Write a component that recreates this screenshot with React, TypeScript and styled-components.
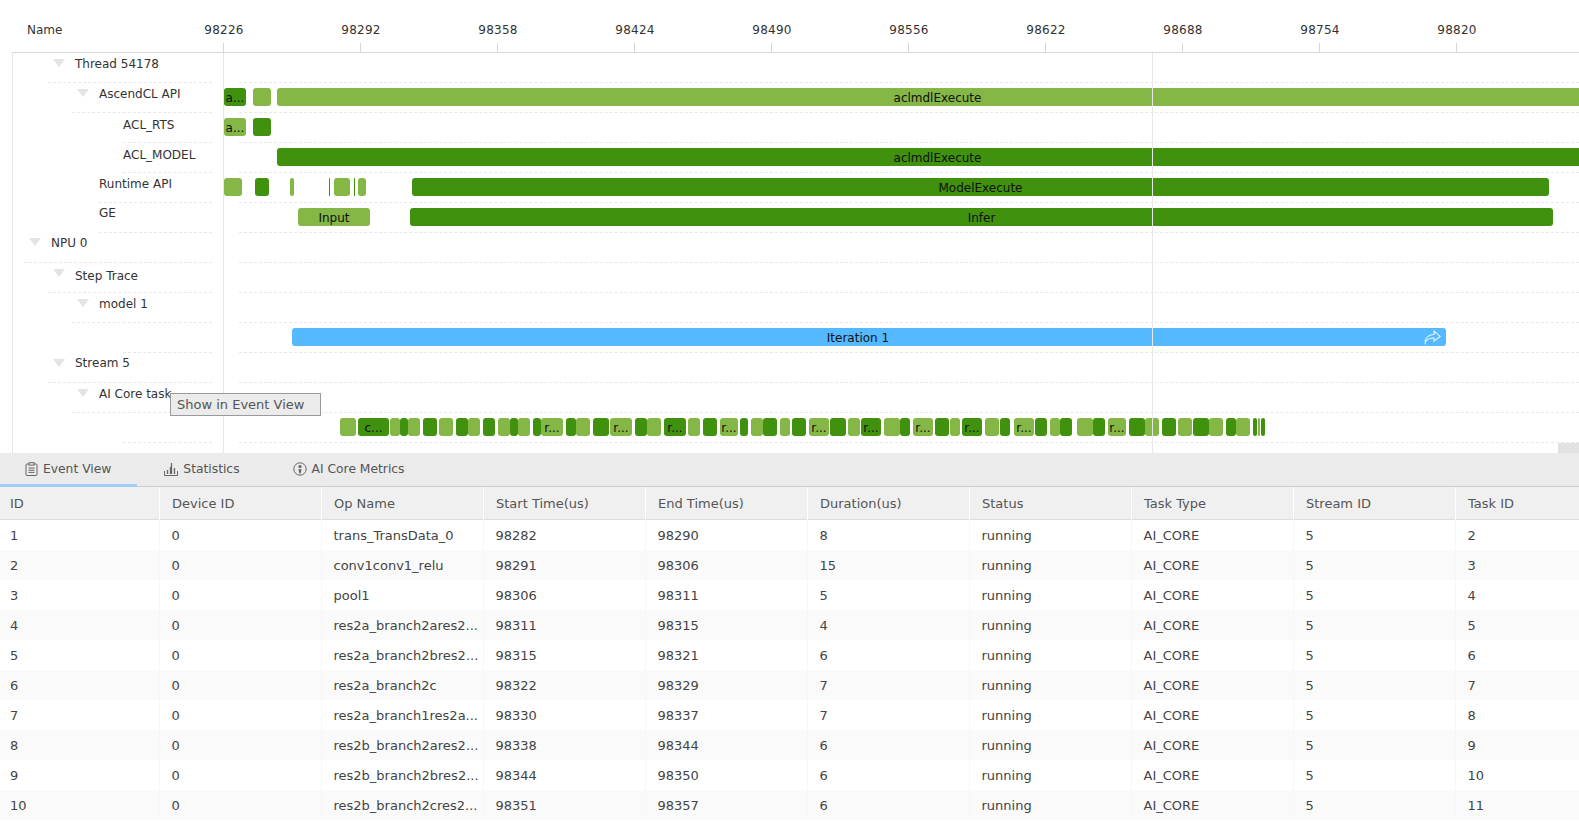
import React from "react";
import styled, { createGlobalStyle } from "styled-components";

const Global = createGlobalStyle`
  html, body { margin: 0; padding: 0; background: #fff; overflow: hidden; }
  body { font-family: "DejaVu Sans", sans-serif; color: #333; }
`;

const Page = styled.div`
  width: 1579px;
  height: 821px;
  overflow: hidden;
  display: flex;
  flex-direction: column;
`;

const Timeline = styled.section`
  position: relative;
  height: 453px;
  flex: none;
  overflow: hidden;
`;

const AxisHeader = styled.header`
  position: relative;
  height: 52px;
  margin-left: 12px;
  border-bottom: 1px solid #d6d6d6;
`;

const NameHeading = styled.span`
  position: absolute;
  left: 15px;
  top: 23px;
  font-size: 12px;
  line-height: 14px;
  color: #333;
`;

const TickLabel = styled.span`
  position: absolute;
  top: 23px;
  transform: translateX(-50%);
  font-size: 12px;
  line-height: 14px;
  letter-spacing: 0.25px;
  color: #333;
`;

const TickMark = styled.i`
  position: absolute;
  top: 43px;
  width: 1px;
  height: 9px;
  background: #d6d6d6;
`;

const ChartBody = styled.div`
  display: flex;
  height: 400px;
`;

const TreeColumn = styled.div`
  width: 199px;
  margin-left: 12px;
  padding-right: 11px;
  border-left: 1px solid #e6e6e6;
  border-right: 1px solid #e6e6e6;
  flex: none;
`;

const TreeRow = styled.div<{ $line: number }>`
  box-sizing: border-box;
  height: 30px;
  margin-left: ${(p) => p.$line - 13}px;
  display: flex;
  align-items: flex-start;
  border-bottom: 1px dashed #e8e8e8;
`;

const Caret = styled.i<{ $top: number }>`
  width: 0;
  height: 0;
  margin: ${(p) => p.$top}px 10px 0 5px;
  border-left: 6px solid transparent;
  border-right: 6px solid transparent;
  border-top: 8px solid #e4e4e7;
  flex: none;
`;

const TreeLabel = styled.span<{ $top: number }>`
  margin-top: ${(p) => p.$top}px;
  font-size: 12px;
  line-height: 14px;
  color: #333;
  white-space: nowrap;
`;

const Tracks = styled.div`
  flex: 1;
  position: relative;
  overflow: hidden;
`;

const TrackRow = styled.div`
  position: relative;
  height: 30px;
  &::after {
    content: "";
    position: absolute;
    left: 15px;
    right: 0;
    bottom: 0;
    border-bottom: 1px dashed #e8e8e8;
  }
`;

const Bar = styled.div<{ $tone: "light" | "dark" | "blue" }>`
  position: absolute;
  box-sizing: border-box;
  top: 5px;
  height: 18px;
  padding-right: ${(p) => (p.$tone === "blue" ? "22px" : "0")};
  border-radius: 3px;
  background: ${(p) => (p.$tone === "light" ? "#84b745" : p.$tone === "dark" ? "#3f910e" : "#54b9ff")};
  color: #111;
  font-size: 12px;
  line-height: 21px;
  text-align: center;
  white-space: nowrap;
  overflow: hidden;
`;

const ShareIcon = styled.svg`
  position: absolute;
  right: 5px;
  top: 2px;
`;

const Cursor = styled.i`
  position: absolute;
  left: 1152px;
  top: 53px;
  bottom: 0;
  width: 1px;
  background: #e8e8e8;
`;

const ContextMenu = styled.div`
  position: absolute;
  left: 170px;
  top: 393px;
  box-sizing: border-box;
  width: 151px;
  height: 23px;
  padding-left: 6px;
  border: 1px solid #9a9a9a;
  background: #ebebeb;
  color: #555;
  font-size: 13px;
  line-height: 21px;
  white-space: nowrap;
`;

const ScrollStub = styled.i`
  position: absolute;
  left: 1558px;
  right: 0;
  top: 443px;
  bottom: 0;
  background: #e2e2e2;
`;

const TabBar = styled.nav`
  box-sizing: border-box;
  flex: none;
  height: 34px;
  display: flex;
  background: #ebebeb;
  border-bottom: 1px solid #ccc;
`;

const Tab = styled.div<{ $active?: boolean }>`
  box-sizing: border-box;
  height: 34px;
  padding: 1px 26px 0 27px;
  display: flex;
  align-items: center;
  gap: 5px;
  font-size: 12.3px;
  color: #555;
  white-space: nowrap;
  border-bottom: 3px solid ${(p) => (p.$active ? "#a3cdf8" : "transparent")};
  &:first-child { padding-left: 25px; }
`;

const TabIcon = styled.svg`
  flex: none;
  color: #666;
`;

const Table = styled.div`
  flex: 1;
  overflow: hidden;
`;

const HeadRow = styled.div`
  display: grid;
  grid-template-columns: 160px repeat(9, 162px);
  width: 1618px;
  height: 33px;
  box-sizing: border-box;
  background: #f0f0f0;
  border-bottom: 1px solid #dcdcdc;
`;

const HeadCell = styled.div`
  padding-left: 12px;
  font-size: 13px;
  line-height: 33px;
  color: #555;
  border-right: 1px solid #fff;
  &:first-child { padding-left: 10px; }
`;

const BodyRow = styled.div<{ $striped: boolean }>`
  display: grid;
  grid-template-columns: 160px repeat(9, 162px);
  width: 1618px;
  height: 30px;
  background: ${(p) => (p.$striped ? "#fafafa" : "#fff")};
`;

const BodyCell = styled.div`
  padding-left: 11.5px;
  font-size: 13px;
  line-height: 31px;
  color: #444;
  white-space: nowrap;
  overflow: hidden;
  border-right: 1px solid #f7f7f7;
  &:first-child { padding-left: 10px; }
`;

type Span = [number, number, "light" | "dark" | "blue", string?];

const ticks = [98226, 98292, 98358, 98424, 98490, 98556, 98622, 98688, 98754, 98820];

const tree = [
  { name: "Thread 54178", line: 48, caret: 6, top: 4 },
  { name: "AscendCL API", line: 72, caret: 6, top: 4 },
  { name: "ACL_RTS", line: 123, top: 5 },
  { name: "ACL_MODEL", line: 123, top: 5 },
  { name: "Runtime API", line: 99, top: 4 },
  { name: "GE", line: 99, top: 3 },
  { name: "NPU 0", line: 24, caret: 5, top: 3 },
  { name: "Step Trace", line: 48, caret: 6, top: 6 },
  { name: "model 1", line: 72, caret: 6, top: 4 },
  { name: "", line: 123, top: 3 },
  { name: "Stream 5", line: 48, caret: 6, top: 3 },
  { name: "AI Core task", line: 72, caret: 6, top: 4 },
  { name: "", line: 123, top: 3 },
] as { name: string; line: number; caret?: number; top: number }[];

const z3 = (a: number, b: number, t: "light" | "dark", l?: string): Span => [330 + a / 3, 330 + b / 3, t, l];
const z4 = (a: number, b: number, t: "light" | "dark", l?: string): Span => [800 + a / 3, 800 + b / 3, t, l];

const tasks: Span[] = [
  z3(30, 78, "light"), z3(84, 177, "dark", "c..."), z3(180, 210, "light"), z3(210, 234, "dark"),
  z3(234, 270, "light"), z3(279, 321, "dark"), z3(327, 369, "light"), z3(378, 414, "dark"),
  z3(414, 450, "light"), z3(459, 495, "dark"), z3(504, 540, "light"), z3(540, 564, "dark"),
  z3(564, 600, "light"), z3(609, 633, "dark"), z3(633, 699, "light", "r..."), z3(708, 738, "dark"),
  z3(738, 780, "light"), z3(789, 837, "dark"), z3(840, 906, "light", "r..."), z3(915, 951, "dark"),
  z3(951, 993, "light"), z3(1002, 1068, "dark", "r..."), z3(1074, 1110, "light"), z3(1119, 1161, "dark"),
  z3(1170, 1224, "light", "r..."), z3(1230, 1254, "dark"), z3(1263, 1299, "light"), z3(1299, 1341, "dark"),
  z3(1350, 1380, "light"), z3(1386, 1428, "dark"),
  z4(27, 87, "light", "r..."), z4(90, 138, "dark"), z4(144, 180, "light"), z4(183, 243, "dark", "r..."),
  z4(252, 300, "light"), z4(300, 330, "dark"), z4(339, 399, "light", "r..."), z4(405, 447, "dark"),
  z4(450, 480, "light"), z4(486, 546, "dark", "r..."), z4(555, 597, "light"), z4(600, 630, "dark"),
  z4(642, 702, "light", "r..."), z4(705, 741, "dark"), z4(750, 780, "light"), z4(780, 816, "dark"),
  z4(831, 879, "light"), z4(879, 915, "dark"), z4(924, 978, "light", "r..."), z4(987, 1035, "dark"),
  z4(1035, 1077, "light"), z4(1086, 1128, "dark"), z4(1134, 1176, "light"), z4(1179, 1227, "dark"),
  z4(1227, 1269, "light"), z4(1278, 1308, "dark"), z4(1308, 1350, "light"), z4(1359, 1371, "dark"),
  z4(1374, 1380, "light"), z4(1383, 1395, "dark"),
];

const trackBars: Span[][] = [
  [],
  [[224, 246, "dark", "a..."], [253, 271, "light"], [277, 1598, "light", "aclmdlExecute"]],
  [[224, 246, "light", "a..."], [253, 271, "dark"]],
  [[277, 1598, "dark", "aclmdlExecute"]],
  [
    [224, 242, "light"], [255, 269, "dark"], [290, 294, "light"], [329, 330, "dark"],
    [334, 350, "light"], [354, 355, "dark"], [358, 366, "light"], [412, 1549, "dark", "ModelExecute"],
  ],
  [[298, 370, "light", "Input"], [410, 1553, "dark", "Infer"]],
  [], [], [],
  [[292, 1446, "blue", "Iteration 1"]],
  [], [],
  tasks,
];

const ops = [
  "trans_TransData_0", "conv1conv1_relu", "pool1", "res2a_branch2ares2...", "res2a_branch2bres2...",
  "res2a_branch2c", "res2a_branch1res2a...", "res2b_branch2ares2...", "res2b_branch2bres2...", "res2b_branch2cres2...",
];
const starts = [98282, 98291, 98306, 98311, 98315, 98322, 98330, 98338, 98344, 98351];
const ends = [98290, 98306, 98311, 98315, 98321, 98329, 98337, 98344, 98350, 98357];
const columns = ["ID", "Device ID", "Op Name", "Start Time(us)", "End Time(us)", "Duration(us)", "Status", "Task Type", "Stream ID", "Task ID"];

const ClipboardIcon = () => (
  <TabIcon width="13" height="14" viewBox="0 0 13 14" fill="none" stroke="currentColor">
    <rect x="1" y="2" width="11" height="11.5" rx="1" />
    <rect x="4" y="0.7" width="5" height="2.4" fill="#ebebeb" />
    <path d="M3.5 6h6M3.5 8.2h6M3.5 10.4h6" />
  </TabIcon>
);

const BarsIcon = () => (
  <TabIcon width="14" height="14" viewBox="0 0 14 14" fill="none" stroke="currentColor">
    <path d="M0.5 9v4.5h13V9" />
    <path d="M3.5 8v4M6.5 5v7M7.5 1v11M10.5 6v6" strokeWidth="1.3" />
  </TabIcon>
);

const MetricsIcon = () => (
  <TabIcon width="14" height="14" viewBox="0 0 14 14" fill="none" stroke="currentColor">
    <circle cx="7" cy="7" r="6.2" />
    <circle cx="7" cy="4.6" r="1.6" fill="currentColor" stroke="none" />
    <path d="M5.4 7.2h3.2L7.6 11.5H6.4z" fill="currentColor" stroke="none" />
  </TabIcon>
);

export default function App() {
  return (
    <Page>
      <Global />
      <Timeline>
        <AxisHeader>
          <NameHeading>Name</NameHeading>
          {ticks.map((t, i) => (
            <React.Fragment key={t}>
              <TickLabel style={{ left: 212 + i * 137 }}>{t}</TickLabel>
              <TickMark style={{ left: 211 + i * 137 }} />
            </React.Fragment>
          ))}
        </AxisHeader>
        <ChartBody>
          <TreeColumn>
            {tree.map((r, i) => (
              <TreeRow key={i} $line={r.line}>
                {r.caret !== undefined && <Caret $top={r.caret} />}
                <TreeLabel $top={r.top}>{r.name}</TreeLabel>
              </TreeRow>
            ))}
          </TreeColumn>
          <Tracks>
            {trackBars.map((bars, i) => (
              <TrackRow key={i}>
                {bars.map(([a, b, tone, label], j) => (
                  <Bar key={j} $tone={tone} style={{ left: a - 224, width: b - a }}>
                    {label}
                    {tone === "blue" && (
                      <ShareIcon width="17" height="15" viewBox="0 0 16 14" fill="none" stroke="#fff" strokeOpacity="0.85">
                        <path d="M1.5 13.5C0 9 3 4.5 9.5 4.2V1l5.7 5-5.7 4.5V7.5C6 7.4 3 8.5 1.5 11" />
                      </ShareIcon>
                    )}
                  </Bar>
                ))}
              </TrackRow>
            ))}
          </Tracks>
        </ChartBody>
        <Cursor />
        <ScrollStub />
        <ContextMenu>Show in Event View</ContextMenu>
      </Timeline>
      <TabBar>
        <Tab $active><ClipboardIcon />Event View</Tab>
        <Tab><BarsIcon />Statistics</Tab>
        <Tab><MetricsIcon />AI Core Metrics</Tab>
      </TabBar>
      <Table>
        <HeadRow>
          {columns.map((c) => <HeadCell key={c}>{c}</HeadCell>)}
        </HeadRow>
        {ops.map((op, i) => (
          <BodyRow key={op} $striped={i % 2 === 1}>
            <BodyCell>{i + 1}</BodyCell>
            <BodyCell>0</BodyCell>
            <BodyCell>{op}</BodyCell>
            <BodyCell>{starts[i]}</BodyCell>
            <BodyCell>{ends[i]}</BodyCell>
            <BodyCell>{ends[i] - starts[i]}</BodyCell>
            <BodyCell>running</BodyCell>
            <BodyCell>AI_CORE</BodyCell>
            <BodyCell>5</BodyCell>
            <BodyCell>{i + 2}</BodyCell>
          </BodyRow>
        ))}
      </Table>
    </Page>
  );
}
